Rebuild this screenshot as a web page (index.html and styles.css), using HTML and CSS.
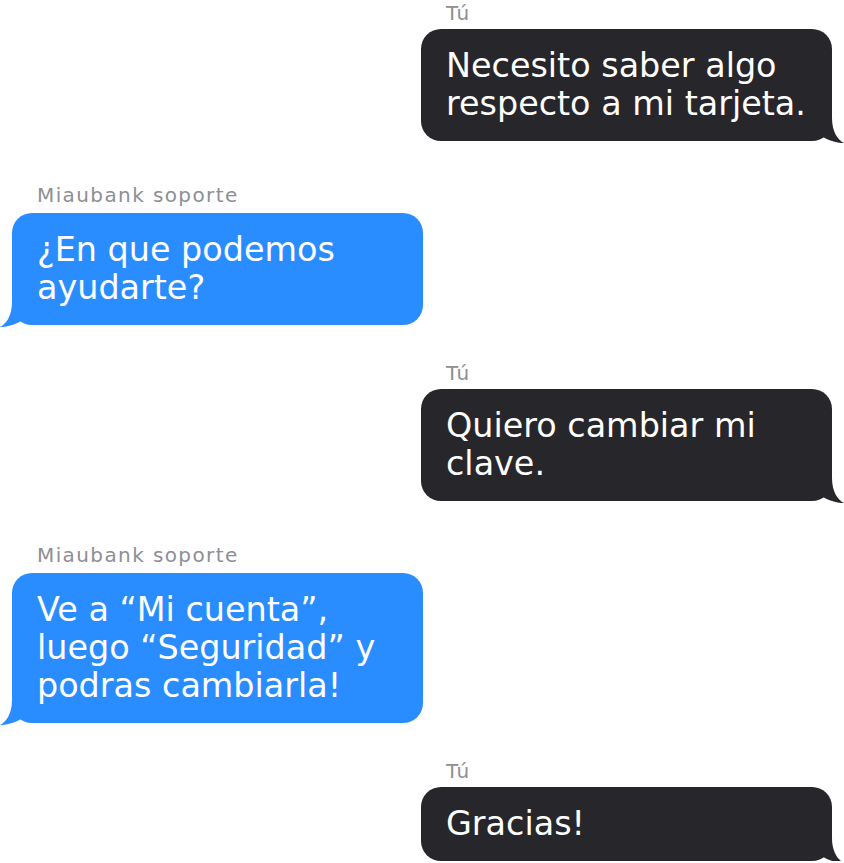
FILE: index.html
```html
<!DOCTYPE html>
<html lang="es">
<head>
<meta charset="utf-8">
<title>Miaubank soporte</title>
<link rel="stylesheet" href="styles.css">
</head>
<body>
<main class="chat">
  <div class="msg out">
    <div class="label">Tú</div>
    <div class="bubble">Necesito saber algo respecto a mi tarjeta.<svg class="tail" viewBox="0 0 32 36" aria-hidden="true"><path d="M20 0 L20 8 C20 22 26 30 32 33 C26 33 18 31 11 27 L0 27 L0 0 Z"/></svg></div>
  </div>
  <div class="msg in">
    <div class="label">Miaubank soporte</div>
    <div class="bubble">¿En que podemos ayudarte?<svg class="tail" viewBox="0 0 32 36" aria-hidden="true"><path d="M12 0 L12 8 C12 22 6 30 0 33 C6 33 14 31 21 27 L32 27 L32 0 Z"/></svg></div>
  </div>
  <div class="msg out">
    <div class="label">Tú</div>
    <div class="bubble">Quiero cambiar mi clave.<svg class="tail" viewBox="0 0 32 36" aria-hidden="true"><path d="M20 0 L20 8 C20 22 26 30 32 33 C26 33 18 31 11 27 L0 27 L0 0 Z"/></svg></div>
  </div>
  <div class="msg in">
    <div class="label">Miaubank soporte</div>
    <div class="bubble">Ve a “Mi cuenta”, luego “Seguridad” y podras cambiarla!<svg class="tail" viewBox="0 0 32 36" aria-hidden="true"><path d="M12 0 L12 8 C12 22 6 30 0 33 C6 33 14 31 21 27 L32 27 L32 0 Z"/></svg></div>
  </div>
  <div class="msg out">
    <div class="label">Tú</div>
    <div class="bubble">Gracias!<svg class="tail" viewBox="0 0 32 36" aria-hidden="true"><path d="M20 0 L20 8 C20 22 26 30 32 33 C26 33 18 31 11 27 L0 27 L0 0 Z"/></svg></div>
  </div>
</main>
</body>
</html>
```
FILE: styles.css
```css
html, body {
  margin: 0;
  background: #ffffff;
}

body {
  font-family: "DejaVu Sans", "Liberation Sans", sans-serif;
}

.chat {
  display: flex;
  flex-direction: column;
  padding: 1px 12px 0;
}

.msg {
  width: 411px;
  display: flex;
  flex-direction: column;
}

.msg.out {
  align-self: flex-end;
}

.msg.in {
  align-self: flex-start;
}

.msg + .msg {
  margin-top: 36px;
}

.label {
  font-size: 20px;
  line-height: 24px;
  letter-spacing: 1.4px;
  color: #8e8e93;
  padding-left: 25px;
  margin-bottom: 4px;
}

.in .label {
  margin-top: 6px;
  margin-bottom: 6px;
}

.bubble {
  position: relative;
  border-radius: 20px;
  padding: 18px 21px 18px 25px;
  font-size: 33.4px;
  line-height: 38px;
  color: #ffffff;
}

.out .bubble {
  background: #27262b;
}

.in .bubble {
  background: #298dff;
}

.tail {
  position: absolute;
  bottom: -5px;
  width: 32px;
  height: 36px;
  display: block;
}

.out .tail {
  right: -12px;
  fill: #27262b;
}

.in .tail {
  left: -12px;
  fill: #298dff;
}
```
